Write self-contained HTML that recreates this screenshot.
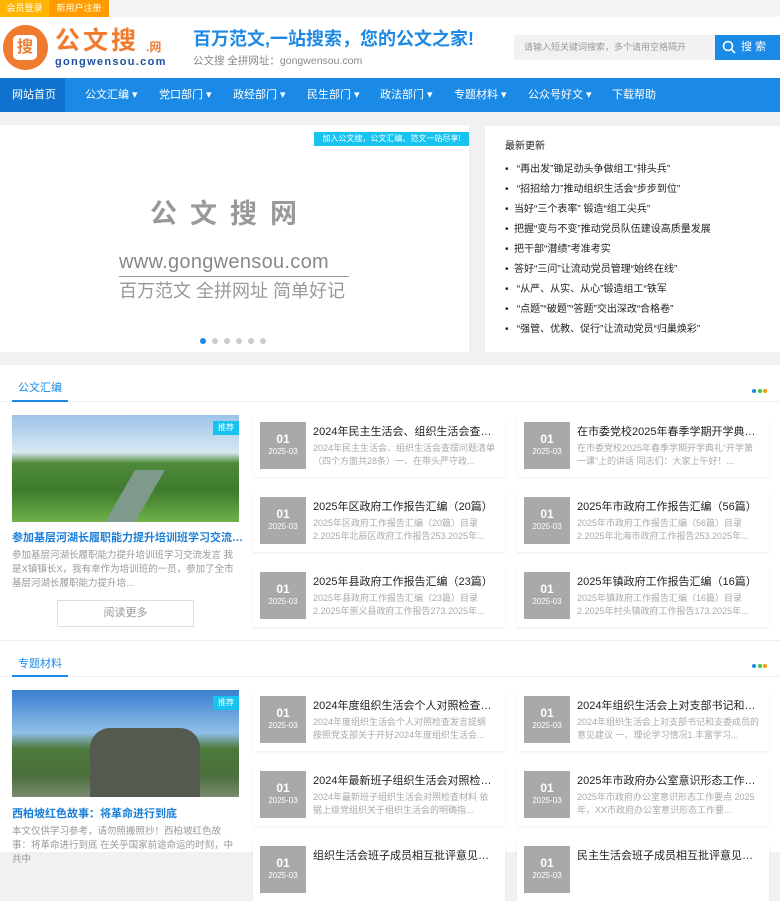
<!DOCTYPE html><html><head><meta charset="utf-8"><style>
*{margin:0;padding:0;box-sizing:border-box}
body{width:780px;height:852px;overflow:hidden;background:#f1f1f1;font-family:"Liberation Sans","Noto Sans CJK SC",sans-serif;position:relative}
.a{position:absolute}
.nav span{position:absolute;top:0;height:34px;line-height:34px;color:#fff;font-size:11px}
.car{position:absolute;width:252px;height:60px;background:#fff;box-shadow:0 1px 2px rgba(0,0,0,.08)}
.dt{position:absolute;left:7px;top:5px;width:46px;height:47px;background:#a9a9a9;color:#fff;text-align:center}
.dt b{display:block;font-size:12px;margin-top:10px}
.dt i{display:block;font-style:normal;font-size:8px;margin-top:1px}
.ct{position:absolute;left:60px;top:6px;font-size:11px;color:#222;white-space:nowrap}
.cd{position:absolute;left:60px;top:25px;width:184px;font-size:9px;line-height:13px;color:#aaa;height:26px;overflow:hidden}
.li{font-size:10px;color:#222;height:20px;line-height:20px;white-space:nowrap}
</style></head><body>
<div class="a" style="left:0;top:0;width:780px;height:17px;background:#f5f5f5"></div>
<div class="a" style="left:0;top:0;width:49px;height:17px;background:#ffb500;color:#fff;font-size:9px;line-height:17px;text-align:center">会员登录</div>
<div class="a" style="left:49px;top:0;width:60px;height:17px;background:#ff9c00;color:#fff;font-size:9px;line-height:17px;text-align:center">新用户注册</div>
<div class="a" style="left:0;top:17px;width:780px;height:61px;background:#fff"></div>
<div class="a" style="left:3px;top:25px;width:45px;height:45px;border-radius:50%;background:#f07a2e"></div>
<div class="a" style="left:13px;top:35px;width:24px;height:25px;border-radius:5px;background:#fff;color:#f07a2e;font-size:16px;font-weight:bold;text-align:center;line-height:25px">搜</div>
<div class="a" style="left:55px;top:26px;font-size:25px;line-height:30px;font-weight:bold;color:#f07a2e;letter-spacing:3px">公文搜</div>
<div class="a" style="left:146px;top:38px;font-size:12px;font-weight:bold;color:#f07a2e">.网</div>
<div class="a" style="left:55px;top:56px;font-size:11px;line-height:13px;font-weight:bold;color:#1d4e9e;letter-spacing:1.3px">gongwensou.com</div>
<div class="a" style="left:193px;top:27px;font-size:18px;line-height:24px;font-weight:bold;color:#1e88e5;white-space:nowrap">百万范文,一站搜索，您的公文之家!</div>
<div class="a" style="left:193px;top:53px;font-size:10.5px;color:#888">公文搜 全拼网址：gongwensou.com</div>
<div class="a" style="left:514px;top:35px;width:201px;height:25px;background:#f2f2f2;color:#999;font-size:9px;line-height:25px;padding-left:10px">请输入短关键词搜索，多个请用空格隔开</div>
<div class="a" style="left:715px;top:35px;width:65px;height:25px;background:#1a8ae6;color:#fff;font-size:11px;line-height:25px;padding-left:26px">搜 索</div>
<svg class="a" style="left:722px;top:40px" width="14" height="14"><circle cx="6" cy="6" r="4.5" stroke="#fff" stroke-width="1.6" fill="none"/><line x1="9.5" y1="9.5" x2="13" y2="13" stroke="#fff" stroke-width="1.6"/></svg>
<div class="a nav" style="left:0;top:78px;width:780px;height:34px;background:#1a8ae6">
<div class="a" style="left:0;top:0;width:65px;height:34px;background:#0f72cf"></div>
<span style="left:12px">网站首页</span><span style="left:85px">公文汇编 ▾</span><span style="left:159px">党口部门 ▾</span><span style="left:233px">政经部门 ▾</span><span style="left:307px">民生部门 ▾</span><span style="left:380px">政法部门 ▾</span><span style="left:454px">专题材料 ▾</span><span style="left:528px">公众号好文 ▾</span><span style="left:612px">下载帮助</span></div>
<div class="a" style="left:0;top:125px;width:469px;height:227px;background:#fff"></div>
<div class="a" style="left:314px;top:132px;width:155px;height:14px;background:#19c3f0;color:#fff;font-size:8px;line-height:14px;text-align:center">加入公文搜，公文汇编、范文一站尽享!</div>
<div class="a" style="left:150px;top:192px;font-size:27px;font-weight:bold;color:#999;letter-spacing:13px">公文搜网</div>
<div class="a" style="left:119px;top:251px;font-size:20px;color:#888;letter-spacing:0.3px">www.gongwensou.com</div>
<div class="a" style="left:119px;top:276px;width:230px;height:1px;background:#999"></div>
<div class="a" style="left:119px;top:277px;font-size:18px;color:#999">百万范文 全拼网址 简单好记</div>
<div class="a" style="left:200px;top:338px;width:6px;height:6px;border-radius:50%;background:#1a8ae6;box-shadow:12px 0 #ccc,24px 0 #ccc,36px 0 #ccc,48px 0 #ccc,60px 0 #ccc"></div>
<div class="a" style="left:485px;top:126px;width:295px;height:226px;background:#fff;padding:10px 0 0 20px">
<div style="font-size:10px;color:#222;height:22px;line-height:22px;margin-bottom:2px">最新更新</div>
<div class="li">•&nbsp;&nbsp;&nbsp;“再出发”锄足劲头争做组工“排头兵”</div>
<div class="li">•&nbsp;&nbsp;&nbsp;“招招给力”推动组织生活会“步步到位”</div>
<div class="li">•&nbsp;&nbsp;当好“三个表率” 锻造“组工尖兵”</div>
<div class="li">•&nbsp;&nbsp;把握“变与不变”推动党员队伍建设高质量发展</div>
<div class="li">•&nbsp;&nbsp;把干部“潜绩”考准考实</div>
<div class="li">•&nbsp;&nbsp;答好“三问”让流动党员管理“始终在线”</div>
<div class="li">•&nbsp;&nbsp;&nbsp;“从严、从实、从心”锻造组工“铁军</div>
<div class="li">•&nbsp;&nbsp;&nbsp;“点题”“破题”“答题”交出深改“合格卷”</div>
<div class="li">•&nbsp;&nbsp;&nbsp;“强管、优教、促行”让流动党员“归巢焕彩”</div></div>

<div class="a" style="left:0;top:365px;width:780px;height:487px;background:#fff"></div>
<div class="a" style="left:0;top:401px;width:780px;height:1px;background:#eee"></div>
<div class="a" style="left:12px;top:379px;width:56px;height:23px;border-bottom:2px solid #1a8ae6;color:#1a8ae6;font-size:11px;text-align:center">公文汇编</div>
<div class="a" style="left:752px;top:389px;width:4px;height:4px;border-radius:50%;background:#1a8ae6;box-shadow:6px 0 #3c3,11px 0 #f90"></div>
<div class="a" style="left:12px;top:415px;width:227px;height:107px;background:linear-gradient(#9cc4e8 0%,#d8e8f2 35%,#4f8a3a 45%,#3d7a2c 70%,#6fb04a 100%)"></div>
<div class="a" style="left:120px;top:470px;width:30px;height:52px;background:#7e9a8a;transform:skewX(-30deg)"></div>
<div class="a" style="left:213px;top:421px;width:26px;height:14px;background:#19c3f0;color:#fff;font-size:8px;line-height:14px;text-align:center">推荐</div>
<div class="a" style="left:12px;top:529px;font-size:11px;font-weight:bold;color:#1a7ed8;white-space:nowrap">参加基层河湖长履职能力提升培训班学习交流…</div>
<div class="a" style="left:12px;top:549px;width:225px;font-size:9.5px;line-height:14px;color:#999">参加基层河湖长履职能力提升培训班学习交流发言 我是X镇镇长X，我有幸作为培训班的一员，参加了全市基层河湖长履职能力提升培...</div>
<div class="a" style="left:57px;top:600px;width:137px;height:27px;border:1px solid #ddd;color:#999;font-size:11px;line-height:25px;text-align:center">阅读更多</div>
<div class="car" style="left:253px;top:417px"><div class="dt"><b>01</b><i>2025-03</i></div><div class="ct">2024年民主生活会、组织生活会查…</div><div class="cd">2024年民主生活会、组织生活会查摆问题清单（四个方面共28条）一、在带头严守政...</div></div>
<div class="car" style="left:517px;top:417px"><div class="dt"><b>01</b><i>2025-03</i></div><div class="ct">在市委党校2025年春季学期开学典…</div><div class="cd">在市委党校2025年春季学期开学典礼“开学第一课”上的讲话 同志们：大家上午好！...</div></div>
<div class="car" style="left:253px;top:492px"><div class="dt"><b>01</b><i>2025-03</i></div><div class="ct">2025年区政府工作报告汇编（20篇）</div><div class="cd">2025年区政府工作报告汇编（20篇）目录2.2025年北辰区政府工作报告253.2025年...</div></div>
<div class="car" style="left:517px;top:492px"><div class="dt"><b>01</b><i>2025-03</i></div><div class="ct">2025年市政府工作报告汇编（56篇）</div><div class="cd">2025年市政府工作报告汇编（56篇）目录2.2025年北海市政府工作报告253.2025年...</div></div>
<div class="car" style="left:253px;top:567px"><div class="dt"><b>01</b><i>2025-03</i></div><div class="ct">2025年县政府工作报告汇编（23篇）</div><div class="cd">2025年县政府工作报告汇编（23篇）目录2.2025年崇义县政府工作报告273.2025年...</div></div>
<div class="car" style="left:517px;top:567px"><div class="dt"><b>01</b><i>2025-03</i></div><div class="ct">2025年镇政府工作报告汇编（16篇）</div><div class="cd">2025年镇政府工作报告汇编（16篇）目录2.2025年村头镇政府工作报告173.2025年...</div></div>
<div class="a" style="left:0;top:640px;width:780px;height:1px;background:#eee"></div>
<div class="a" style="left:0;top:676px;width:780px;height:1px;background:#eee"></div>
<div class="a" style="left:12px;top:655px;width:56px;height:22px;border-bottom:2px solid #1a8ae6;color:#1a8ae6;font-size:11px;text-align:center">专题材料</div>
<div class="a" style="left:752px;top:664px;width:4px;height:4px;border-radius:50%;background:#1a8ae6;box-shadow:6px 0 #3c3,11px 0 #f90"></div>
<div class="a" style="left:12px;top:690px;width:227px;height:107px;background:linear-gradient(#3a7fd0 0%,#8fbfe8 40%,#4c7a3a 55%,#4b6f3b 80%,#7a8a70 100%)"></div>
<div class="a" style="left:90px;top:728px;width:110px;height:69px;background:#555a50;border-radius:20px 20px 0 0"></div>
<div class="a" style="left:213px;top:696px;width:26px;height:14px;background:#19c3f0;color:#fff;font-size:8px;line-height:14px;text-align:center">推荐</div>
<div class="a" style="left:12px;top:805px;font-size:11px;font-weight:bold;color:#1a7ed8">西柏坡红色故事：将革命进行到底</div>
<div class="a" style="left:12px;top:825px;width:225px;font-size:9.5px;line-height:14px;color:#999">本文仅供学习参考，请勿照搬照抄！西柏坡红色故事：将革命进行到底 在关乎国家前途命运的时刻，中共中</div>
<div class="car" style="left:253px;top:691px"><div class="dt"><b>01</b><i>2025-03</i></div><div class="ct">2024年度组织生活会个人对照检查…</div><div class="cd">2024年度组织生活会个人对照检查发言提纲 按照党支部关于开好2024年度组织生活会...</div></div>
<div class="car" style="left:517px;top:691px"><div class="dt"><b>01</b><i>2025-03</i></div><div class="ct">2024年组织生活会上对支部书记和…</div><div class="cd">2024年组织生活会上对支部书记和支委成员的意见建议 一、理论学习情况1.丰富学习...</div></div>
<div class="car" style="left:253px;top:766px"><div class="dt"><b>01</b><i>2025-03</i></div><div class="ct">2024年最新班子组织生活会对照检…</div><div class="cd">2024年最新班子组织生活会对照检查材料 依据上级党组织关于组织生活会的明确指...</div></div>
<div class="car" style="left:517px;top:766px"><div class="dt"><b>01</b><i>2025-03</i></div><div class="ct">2025年市政府办公室意识形态工作…</div><div class="cd">2025年市政府办公室意识形态工作要点 2025年，XX市政府办公室意识形态工作要...</div></div>
<div class="car" style="left:253px;top:841px"><div class="dt"><b>01</b><i>2025-03</i></div><div class="ct">组织生活会班子成员相互批评意见…</div></div>
<div class="car" style="left:517px;top:841px"><div class="dt"><b>01</b><i>2025-03</i></div><div class="ct">民主生活会班子成员相互批评意见…</div></div>
</body></html>
